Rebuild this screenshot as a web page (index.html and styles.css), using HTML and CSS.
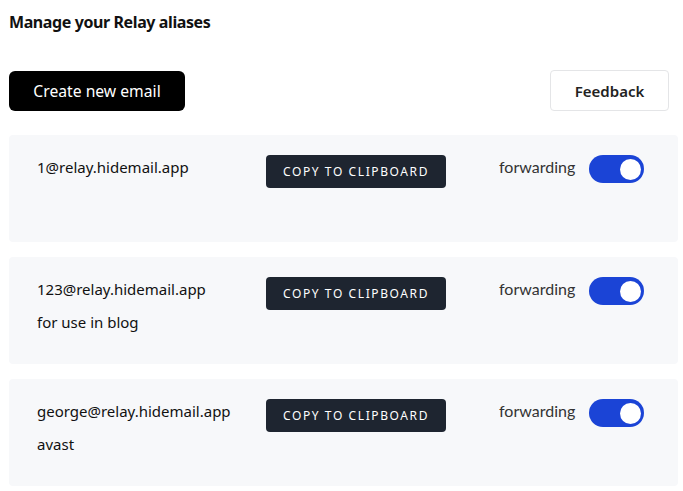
FILE: index.html
```html
<!DOCTYPE html>
<html>
<head>
<meta charset="utf-8">
<link rel="stylesheet" href="styles.css">
</head>
<body>
<div class="page">
  <h1 class="title">Manage your Relay aliases</h1>
  <div class="toolbar">
    <button class="btn-create">Create new email</button>
    <button class="btn-feedback">Feedback</button>
  </div>
  <div class="list">
    <div class="card">
      <div class="info">
        <div class="email">1@relay.hidemail.app</div>
      </div>
      <button class="btn-copy">COPY TO CLIPBOARD</button>
      <div class="status">
        <span class="label">forwarding</span>
        <span class="toggle"><span class="knob"></span></span>
      </div>
    </div>
    <div class="card">
      <div class="info">
        <div class="email">123@relay.hidemail.app</div>
        <div class="note">for use in blog</div>
      </div>
      <button class="btn-copy">COPY TO CLIPBOARD</button>
      <div class="status">
        <span class="label">forwarding</span>
        <span class="toggle"><span class="knob"></span></span>
      </div>
    </div>
    <div class="card">
      <div class="info">
        <div class="email">george@relay.hidemail.app</div>
        <div class="note">avast</div>
      </div>
      <button class="btn-copy">COPY TO CLIPBOARD</button>
      <div class="status">
        <span class="label">forwarding</span>
        <span class="toggle"><span class="knob"></span></span>
      </div>
    </div>
  </div>
</div>
</body>
</html>
```
FILE: styles.css
```css
* { box-sizing: border-box; }
html, body { margin: 0; padding: 0; background: #fff; }
body { font-family: "Noto Sans", "Open Sans", sans-serif; color: #111; }
.page { padding: 10px 5px 0 9px; }
.title {
  margin: 0;
  font-size: 16px;
  font-weight: 700;
  letter-spacing: -0.4px;
  line-height: 24px;
  color: #111;
}
.toolbar {
  display: flex;
  justify-content: space-between;
  align-items: center;
  margin-top: 36px;
  padding-right: 9px;
}
.btn-create {
  width: 176px;
  height: 40px;
  background: #000;
  color: #fff;
  border: none;
  border-radius: 6px;
  font-family: inherit;
  font-size: 15.7px;
  padding: 0;
}
.btn-feedback {
  width: 119px;
  height: 41px;
  background: #fff;
  color: #222;
  border: 1px solid #e4e5e7;
  border-radius: 4px;
  font-family: inherit;
  font-size: 15px;
  font-weight: 600;
  padding: 0;
}
.list {
  display: flex;
  flex-direction: column;
  gap: 15px;
  margin-top: 24px;
}
.card {
  display: flex;
  align-items: flex-start;
  height: 107px;
  background: #f7f8fa;
  border-radius: 4px;
  padding: 20px 0 0 28px;
}
.info {
  width: 229px;
  display: flex;
  flex-direction: column;
  gap: 11px;
  padding-top: 1px;
}
.email, .note {
  font-size: 15px;
  line-height: 22px;
  color: #111;
}
.btn-copy {
  width: 180px;
  height: 33px;
  background: #1e2530;
  color: #fff;
  border: none;
  border-radius: 4px;
  font-family: inherit;
  font-size: 12px;
  letter-spacing: 1.6px;
  padding: 0;
}
.status {
  display: flex;
  align-items: flex-start;
  margin-left: 53px;
  gap: 14px;
}
.label {
  font-family: Lato, sans-serif;
  font-size: 16px;
  line-height: 22px;
  color: #333;
  padding-top: 1px;
}
.toggle {
  display: flex;
  align-items: center;
  justify-content: flex-end;
  width: 55px;
  height: 28px;
  background: #1b44d6;
  border-radius: 14px;
  padding-right: 3px;
}
.knob {
  width: 21px;
  height: 21px;
  background: #fff;
  border-radius: 50%;
}
```
